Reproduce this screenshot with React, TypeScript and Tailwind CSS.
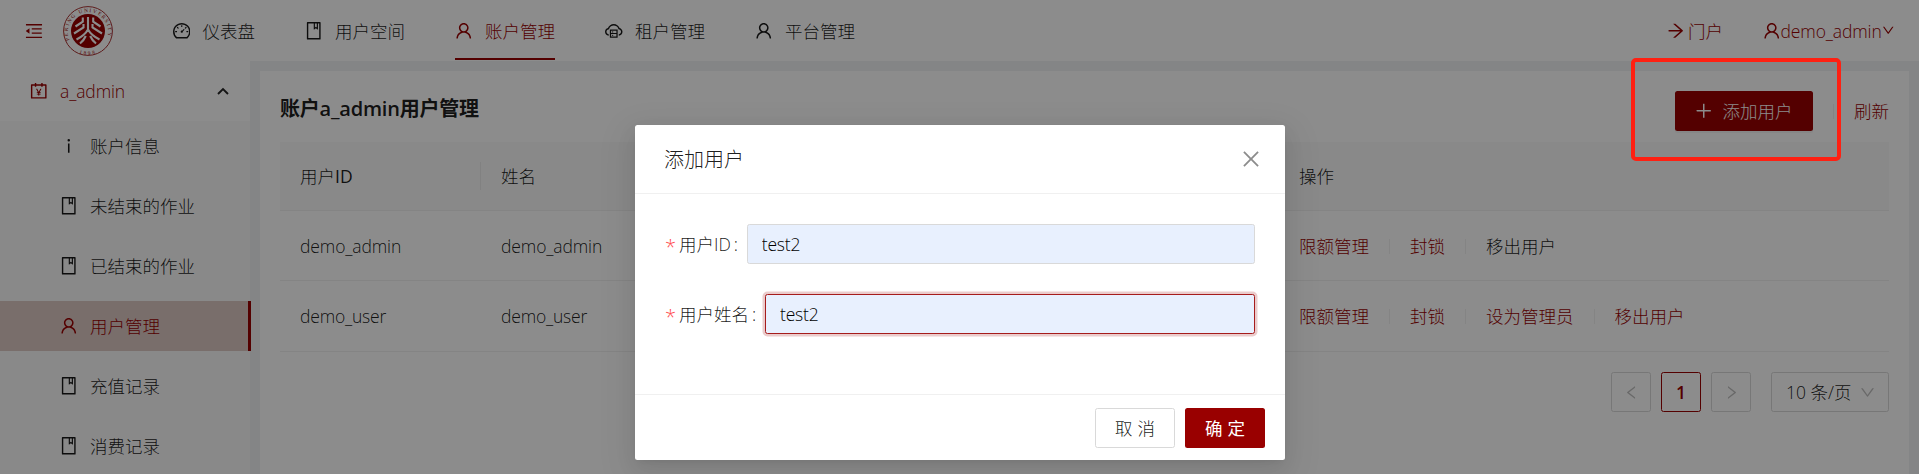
import type { ReactNode } from "react";
import {
  AiOutlineMenuFold, AiOutlineDashboard, AiOutlineBook, AiOutlineUser, AiOutlineCloudServer,
  AiOutlineArrowRight, AiOutlineDown, AiOutlinePlus, AiOutlineLeft, AiOutlineRight,
  AiOutlineClose, AiOutlineAccountBook, AiOutlineInfo,
} from "react-icons/ai";
import type { IconType } from "react-icons";

// Ant Design crops the 1024-unit glyph grid by 64 units on every side.
function Glyph({ of: Icon, className = "size-[17.5px] shrink-0" }: { of: IconType; className?: string }) {
  return <Icon viewBox="64 64 896 896" className={className} />;
}

function Logo() {
  return (
    <svg viewBox="0 0 50 50" className="size-[50px]">
      <defs>
        <path id="ring-top" d="M 6.4 34 A 20.2 20.2 0 1 1 43.6 34" />
        <path id="ring-bottom" d="M 11 44.2 A 23.2 23.2 0 0 0 39 44.2" />
      </defs>
      <circle cx="25" cy="25" r="24.4" fill="#fff" stroke="#a33" strokeWidth="1" />
      <circle cx="25" cy="25" r="17" fill="#900" />
      <g fill="none" stroke="#fff" strokeWidth="2.1">
        <path d="M25 11V26" />
        <path d="M19.800 11.500v4.200L12.500 20.500M30.200 11.500v4.200L37.500 20.500" />
        <path d="M20.500 18v3.500L11 27.500M29.500 18v3.500L39 27.500" />
        <path d="M25 23.500C22.500 28 18.500 31 13.500 33.500M25 23.500C27.500 28 31.500 31 36.500 33.500" />
        <path d="M22.800 30C21.500 33 20 35 17 37.500M27.200 30C28.500 33 30 35 33 37.500" />
      </g>
      <g fill="#900" fontFamily="Liberation Serif, serif" fontWeight="400">
        <text fontSize="5.2"><textPath href="#ring-top" textLength="75">PEKING UNIVERSITY</textPath></text>
        <text fontSize="5.2"><textPath href="#ring-bottom" startOffset="50%" textAnchor="middle" letterSpacing="2">1898</textPath></text>
      </g>
    </svg>
  );
}

function NavItem({ icon, label, active }: { icon: IconType; label: string; active?: boolean }) {
  return (
    <a className={active ? "flex px-[25px] text-[#900]" : "flex px-[25px]"}>
      <span className={active ? "flex h-[60px] items-center gap-[12.5px] border-b-2 border-[#900] pt-1" : "flex h-[60px] items-center gap-[12.5px] pt-0.5"}>
        <Glyph of={icon} />
        <span className="mt-px">{label}</span>
      </span>
    </a>
  );
}

function SideItem({ icon, label, active }: { icon: IconType; label: string; active?: boolean }) {
  return (
    <li className={active
      ? "mb-2.5 flex h-[50px] w-[251px] items-center gap-[12.5px] border-r-3 border-[#900] bg-[#dcc8c4] pl-[60px] text-[#900]"
      : "mb-2.5 flex h-[50px] items-center gap-[12.5px] pl-[60px]"}>
      <Glyph of={icon} />
      <span className="mt-0.5">{label}</span>
    </li>
  );
}

function Actions({ items, muted }: { items: string[]; muted?: string }) {
  return (
    <div className="flex items-center">
      {items.map((item, i) => (
        <span key={item} className="flex items-center">
          {i > 0 && <span className="mx-5 h-[15px] w-px bg-black/6" />}
          <span className={item === muted ? "" : "text-[#900]"}>{item}</span>
        </span>
      ))}
    </div>
  );
}

function Row({ children, head }: { children: ReactNode; head?: boolean }) {
  return (
    <div className={head
      ? "grid h-[69px] grid-cols-[201px_798px_1fr] items-center border-b border-[#f0f0f0] bg-[#fafafa]"
      : "grid h-[70px] grid-cols-[201px_798px_1fr] items-center border-b border-[#f0f0f0] pt-0.5 last:h-[71px] last:pt-px"}>
      {children}
    </div>
  );
}

function Field({ label, focused }: { label: string; focused?: boolean }) {
  return (
    <label className="flex h-10 items-center">
      <span className="mr-[5px] w-[9px] pt-1.5 text-[20px] text-[#ff4d4f]">*</span>
      <span className="whitespace-nowrap pt-0.5">{label}</span>
      <span className="ml-[3px] mr-[9px] w-[4px] pt-0.5 text-center">:</span>
      <input
        readOnly
        defaultValue="test2"
        className={focused
          ? "h-10 min-w-0 flex-1 rounded-[2.5px] border border-[#a61c1c] bg-[#e8f0fe] px-[14px] tracking-[-0.2px] text-black shadow-[0_0_0_2.5px_rgba(153,0,0,0.2)] outline-none"
          : "h-10 min-w-0 flex-1 rounded-[2.5px] border border-[#d9d9d9] bg-[#e8f0fe] px-[14px] tracking-[-0.2px] text-black outline-none"}
      />
    </label>
  );
}

export default function App() {
  return (
    <div className="relative h-[474px] w-full overflow-hidden bg-[#f0f2f5] font-['Open_Sans','Noto_Sans_CJK_SC',sans-serif] text-[17.5px] leading-[27.5px] font-light text-black/90">
      <header className="flex h-[61px] items-start bg-white pl-[25px]">
        <Glyph of={AiOutlineMenuFold} className="mt-[22px] size-[18px] text-[#900]" />
        <div className="ml-5 mt-[6px]"><Logo /></div>
        <nav className="ml-[34.500px] flex flex-1">
          <NavItem icon={AiOutlineDashboard} label="仪表盘" />
          <NavItem icon={AiOutlineBook} label="用户空间" />
          <NavItem icon={AiOutlineUser} label="账户管理" active />
          <NavItem icon={AiOutlineCloudServer} label="租户管理" />
          <NavItem icon={AiOutlineUser} label="平台管理" />
        </nav>
        <div className="flex h-[61px] items-center pr-[25px] text-[#900]">
          <Glyph of={AiOutlineArrowRight} className="mr-1 size-[17.5px]" />
          <span className="pt-0.5">门户</span>
          <Glyph of={AiOutlineUser} className="ml-10 size-[17.5px]" />
          <span className="w-[101px] pt-0.5 tracking-[-0.12px]">demo_admin</span>
          <Glyph of={AiOutlineDown} className="size-[12.5px]" />
        </div>
      </header>
      <div className="flex h-[413px]">
        <aside className="w-[250px] shrink-0 bg-[#fafafa]">
          <div className="flex h-[60px] items-center bg-white pl-[30px] pr-[21px] text-[#900]">
            <Glyph of={AiOutlineAccountBook} className="mr-[12.5px] size-[17.5px]" />
            <span className="flex-1 pt-0.5 tracking-[-0.12px]">a_admin</span>
            <svg viewBox="0 0 12 8" className="h-2 w-3 fill-none stroke-black/85 stroke-[1.9]"><path d="M1 7L6 2L11 7" /></svg>
          </div>
          <ul>
            <SideItem icon={AiOutlineInfo} label="账户信息" />
            <SideItem icon={AiOutlineBook} label="未结束的作业" />
            <SideItem icon={AiOutlineBook} label="已结束的作业" />
            <SideItem icon={AiOutlineUser} label="用户管理" active />
            <SideItem icon={AiOutlineBook} label="充值记录" />
            <SideItem icon={AiOutlineBook} label="消费记录" />
          </ul>
        </aside>
        <main className="ml-2.5 mr-2.5 mt-2.5 flex-1 bg-white px-5 pt-5">
          <div className="flex h-10 items-center">
            <h1 className="flex-1 pb-1 text-[20px] font-semibold tracking-[-0.2px]">账户a_admin用户管理</h1>
            <button className="flex h-10 w-[138px] items-center rounded-[2.5px] bg-[#900] pl-5 text-white shadow-[0_2px_0_rgba(0,0,0,0.045)]">
              <Glyph of={AiOutlinePlus} className="mr-[10px] size-[17.5px]" />
              <span className="pt-0.5">添加用户</span>
            </button>
            <span className="mx-5 h-[15px] w-px bg-black/6" />
            <a className="pt-0.5 text-[#900]">刷新</a>
          </div>
          <section className="mt-[11px]">
            <Row head>
              <div className="flex h-7 items-center border-r border-black/6 pl-5 pt-0.5">用户<span className="font-normal">ID</span></div>
              <div className="pl-5 pt-0.5">姓名</div>
              <div className="pl-5 pt-0.5">操作</div>
            </Row>
            <Row>
              <div className="pl-5 tracking-[-0.12px]">demo_admin</div>
              <div className="pl-5 tracking-[-0.12px]">demo_admin</div>
              <div className="pl-5"><Actions items={["限额管理", "封锁", "移出用户"]} muted="移出用户" /></div>
            </Row>
            <Row>
              <div className="pl-5 tracking-[-0.2px]">demo_user</div>
              <div className="pl-5 tracking-[-0.2px]">demo_user</div>
              <div className="pl-5"><Actions items={["限额管理", "封锁", "设为管理员", "移出用户"]} /></div>
            </Row>
          </section>
          <div className="mt-5 flex justify-end gap-2.5">
            <span className="flex size-10 items-center justify-center rounded-[2.5px] border border-[#d9d9d9] text-black/25"><Glyph of={AiOutlineLeft} className="size-[15px]" /></span>
            <span className="flex size-10 items-center justify-center rounded-[2.5px] border border-[#900] pt-0.5 font-semibold text-[#900]">1</span>
            <span className="flex size-10 items-center justify-center rounded-[2.5px] border border-[#d9d9d9] text-black/25"><Glyph of={AiOutlineRight} className="size-[15px]" /></span>
            <span className="ml-2.5 flex h-10 w-[118px] items-center justify-between rounded-[2.5px] border border-[#d9d9d9] pl-[14px] pr-[13px]">
              <span className="pt-0.5">10 条/页</span>
              <Glyph of={AiOutlineDown} className="size-[15px] text-black/25" />
            </span>
          </div>
        </main>
      </div>

      <div className="absolute inset-0 flex items-start bg-black/45 pl-[635px] pt-[125px]">
        <div role="dialog" className="h-[335px] w-[650px] rounded-[2.5px] bg-white shadow-[0_3.75px_7.5px_-5px_rgba(0,0,0,0.12),0_7.5px_20px_rgba(0,0,0,0.08),0_11px_35px_10px_rgba(0,0,0,0.05)]">
          <div className="flex h-[69px] items-center justify-between border-b border-[#f0f0f0] pl-[29px] pr-[24px]">
            <h2 className="pt-0.5 text-[20px]">添加用户</h2>
            <Glyph of={AiOutlineClose} className="size-5 text-black/45" />
          </div>
          <div className="flex h-[200px] flex-col gap-[30px] px-[30px] pt-[30px]">
            <Field label="用户ID" />
            <Field label="用户姓名" focused />
          </div>
          <div className="flex h-[66px] justify-end gap-2.5 border-t border-[#f0f0f0] pr-5 pt-[13px]">
            <button className="h-10 w-20 rounded-[2.5px] border border-[#d9d9d9] pl-[5px] pt-0.5 tracking-[5px]">取消</button>
            <button className="h-10 w-20 rounded-[2.5px] bg-[#900] pl-[5px] pt-0.5 font-normal tracking-[5px] text-white">确定</button>
          </div>
        </div>
      </div>
      <div className="absolute left-[1631px] top-[58px] h-[103px] w-[210px] rounded-[5px] border-4 border-[#ff2012]" />
    </div>
  );
}
